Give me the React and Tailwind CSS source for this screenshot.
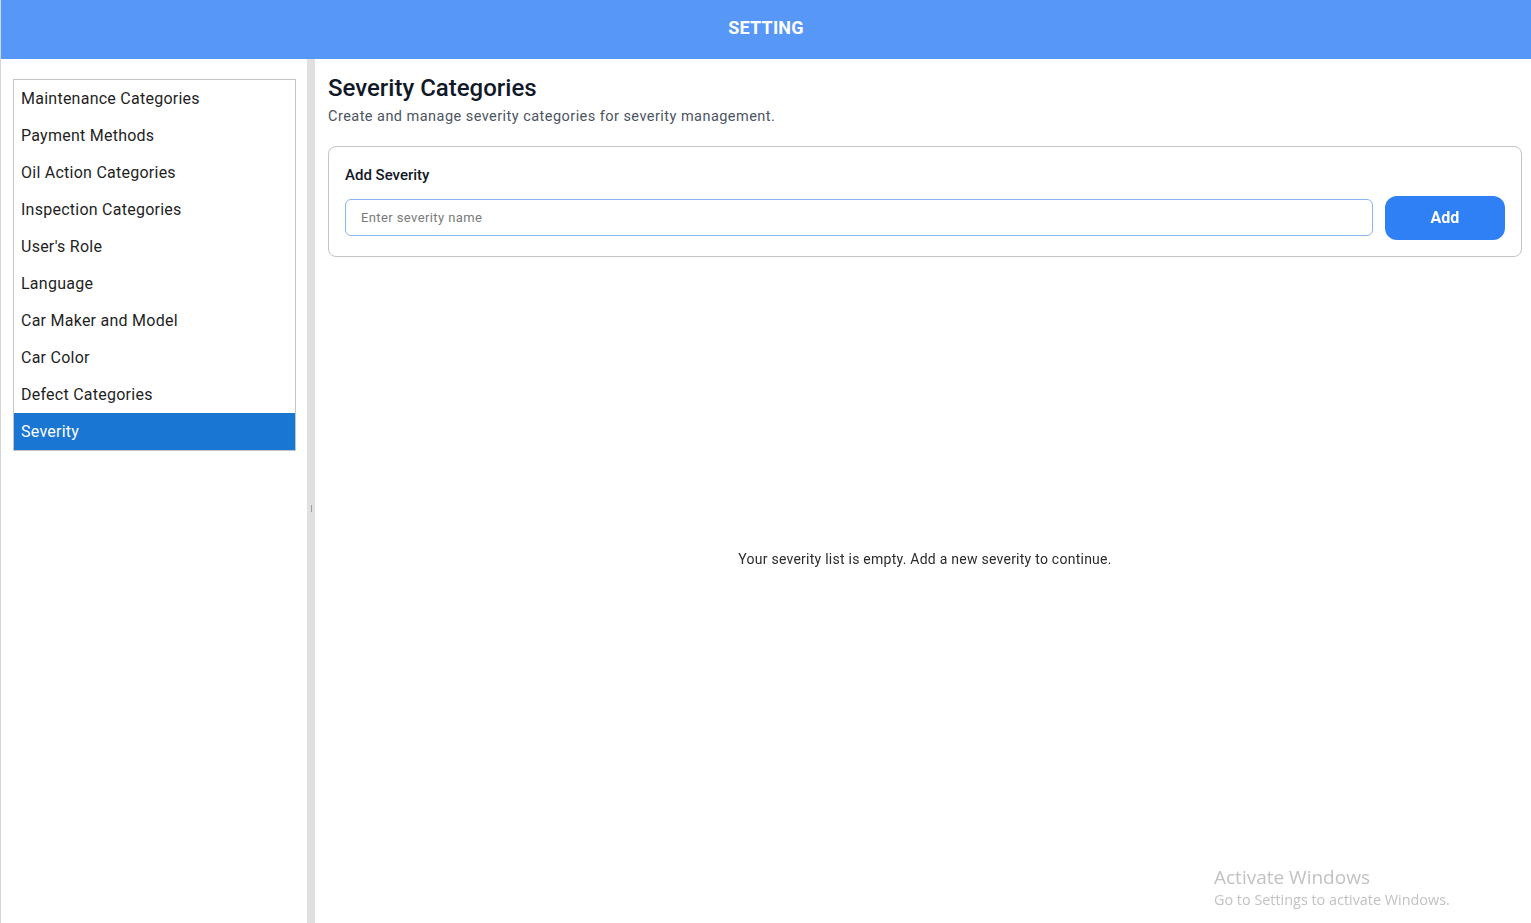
import { useState } from 'react';

const menuItems = [
  'Maintenance Categories',
  'Payment Methods',
  'Oil Action Categories',
  'Inspection Categories',
  "User's Role",
  'Language',
  'Car Maker and Model',
  'Car Color',
  'Defect Categories',
  'Severity',
];

export default function App() {
  const [active, setActive] = useState('Severity');
  const [name, setName] = useState('');

  return (
    <div className="relative flex h-[923px] flex-col overflow-hidden border-l border-[#d6d6d6] bg-white font-['Roboto',sans-serif]">
      <header className="flex h-[59px] shrink-0 items-center justify-center bg-[#5797f7] pb-[4px]">
        <h1 className="text-[18px] font-bold tracking-[0.2px] text-white">SETTING</h1>
      </header>

      <div className="flex min-h-0 flex-1">
        <aside className="w-[306px] shrink-0 pl-3 pr-[11px] pt-5">
          <ul className="border border-[#c4c4c4]">
            {menuItems.map((item) => (
              <li key={item}>
                <button
                  onClick={() => setActive(item)}
                  className={
                    item === active
                      ? 'flex h-[37px] w-full items-center bg-[#1976d2] px-[7px] text-left text-[16px] tracking-[0.25px] text-white'
                      : 'flex h-[37px] w-full items-center px-[7px] text-left text-[16px] tracking-[0.25px] text-[#1f1f1f]'
                  }
                >
                  {item}
                </button>
              </li>
            ))}
          </ul>
        </aside>

        <div className="flex w-[8px] shrink-0 justify-center bg-[#e0e0e0] pt-[446px]">
          <div className="h-[7px] w-px bg-[#9e9e9e]" />
        </div>

        <main className="flex min-w-0 flex-1 flex-col pl-[13px] pr-[9px] pt-[13px]">
          <h2 className="text-[24px] font-medium leading-[32px] text-[#111827]">Severity Categories</h2>
          <p className="mt-[2px] text-[14.5px] tracking-[0.46px] text-[#4b5563]">
            Create and manage severity categories for severity management.
          </p>

          <section className="mt-[18px] rounded-lg border border-[#c4c4c4] px-4 pb-4 pt-[17px]">
            <h3 className="text-[15px] font-medium leading-[22px] text-[#111827]">Add Severity</h3>
            <div className="mt-[10px] flex items-center gap-3">
              <input
                autoFocus
                value={name}
                onChange={(event) => setName(event.target.value)}
                placeholder="Enter severity name"
                className="h-[37px] flex-1 rounded-md border-[1.5px] border-[#8ab4f8] px-[15px] text-[13px] tracking-[0.4px] text-[#111827] caret-[#5b3cc4] outline-none placeholder:text-[#7a7a7a]"
              />
              <button className="h-[44px] w-[120px] rounded-xl bg-[#2f80f5] text-[16px] font-bold text-white">
                Add
              </button>
            </div>
          </section>

          <div className="flex flex-1 items-start justify-center pt-[292px]">
            <p className="text-[14px] tracking-[0.25px] text-[#2b2b2b]">
              Your severity list is empty. Add a new severity to continue.
            </p>
          </div>
        </main>
      </div>

      <div className="absolute left-[1213px] top-[864px] font-['Open_Sans',sans-serif] text-[#c2c2c2]">
        <p className="text-[19px] leading-[26px]">Activate Windows</p>
        <p className="text-[14.4px] leading-[20px]">Go to Settings to activate Windows.</p>
      </div>
    </div>
  );
}
